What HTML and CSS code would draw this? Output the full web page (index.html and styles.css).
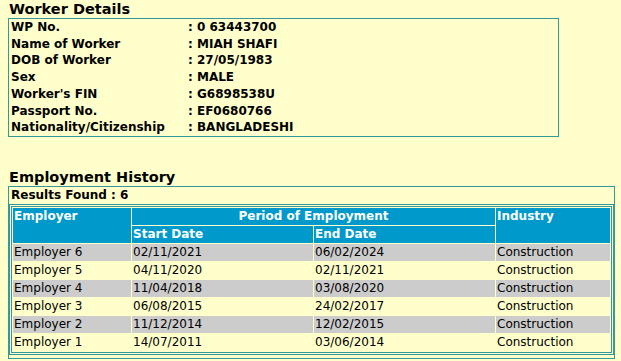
FILE: index.html
```html
<!DOCTYPE html>
<html>
<head>
<meta charset="utf-8">
<link rel="stylesheet" href="styles.css">
</head>
<body>
<div class="page">
  <h2 class="title">Worker Details</h2>
  <div class="details">
    <div class="drow"><span class="lbl">WP No.</span><span class="val">: 0 63443700</span></div>
    <div class="drow"><span class="lbl">Name of Worker</span><span class="val">: MIAH SHAFI</span></div>
    <div class="drow"><span class="lbl">DOB of Worker</span><span class="val">: 27/05/1983</span></div>
    <div class="drow"><span class="lbl">Sex</span><span class="val">: MALE</span></div>
    <div class="drow"><span class="lbl">Worker's FIN</span><span class="val">: G6898538U</span></div>
    <div class="drow"><span class="lbl">Passport No.</span><span class="val">: EF0680766</span></div>
    <div class="drow"><span class="lbl">Nationality/Citizenship</span><span class="val">: BANGLADESHI</span></div>
  </div>

  <h2 class="title title2">Employment History</h2>
  <div class="emp">
    <div class="found">Results Found : 6</div>
    <table class="hist">
      <thead>
        <tr>
          <th rowspan="2" class="c1">Employer</th>
          <th colspan="2" class="center">Period of Employment</th>
          <th rowspan="2" class="c4">Industry</th>
        </tr>
        <tr>
          <th class="c2">Start Date</th>
          <th class="c3">End Date</th>
        </tr>
      </thead>
      <tbody>
        <tr class="g"><td>Employer 6</td><td>02/11/2021</td><td>06/02/2024</td><td>Construction</td></tr>
        <tr class="y"><td>Employer 5</td><td>04/11/2020</td><td>02/11/2021</td><td>Construction</td></tr>
        <tr class="g"><td>Employer 4</td><td>11/04/2018</td><td>03/08/2020</td><td>Construction</td></tr>
        <tr class="y"><td>Employer 3</td><td>06/08/2015</td><td>24/02/2017</td><td>Construction</td></tr>
        <tr class="g"><td>Employer 2</td><td>11/12/2014</td><td>12/02/2015</td><td>Construction</td></tr>
        <tr class="y"><td>Employer 1</td><td>14/07/2011</td><td>03/06/2014</td><td>Construction</td></tr>
      </tbody>
    </table>
  </div>
</div>
</body>
</html>
```
FILE: styles.css
```css
html, body {
  margin: 0;
  padding: 0;
  background: #ffffcc;
}
body {
  font-family: "DejaVu Sans", Verdana, sans-serif;
  font-size: 12px;
  color: #000;
}
.page {
  padding: 0 6px 0 8px;
}
.title {
  margin: 0;
  padding-left: 1px;
  font-size: 14.5px;
  line-height: 18px;
  font-weight: bold;
  color: #000;
}
.title2 {
  margin-top: 31px;
}
.details {
  width: 547px;
  border: 1px solid #339999;
  font-weight: bold;
  padding-left: 2px;
}
.drow {
  display: flex;
  height: 16.72px;
  line-height: 16.72px;
}
.lbl {
  width: 177px;
}
.emp {
  border: 1px solid #339999;
  padding: 0 0 3px 0;
}
.found {
  font-weight: bold;
  line-height: 17px;
  padding-left: 2px;
}
.hist {
  width: 100%;
  border: 3px double #339999;
  border-spacing: 1px 1px;
  margin-top: 0;
}
.hist th, .hist td {
  padding: 0 1px;
  height: 17px;
  line-height: 17px;
  text-align: left;
  vertical-align: top;
}
.hist th {
  background: #0099cc;
  color: #fff;
  font-weight: bold;
}
.hist th.center {
  text-align: center;
}
.hist .c1 { width: 116px; }
.hist .c2 { width: 179px; }
.hist .c3 { width: 179px; }
.hist tr.g td { background: #cccccc; }
.hist tr.y td { background: #ffffcc; }
```
